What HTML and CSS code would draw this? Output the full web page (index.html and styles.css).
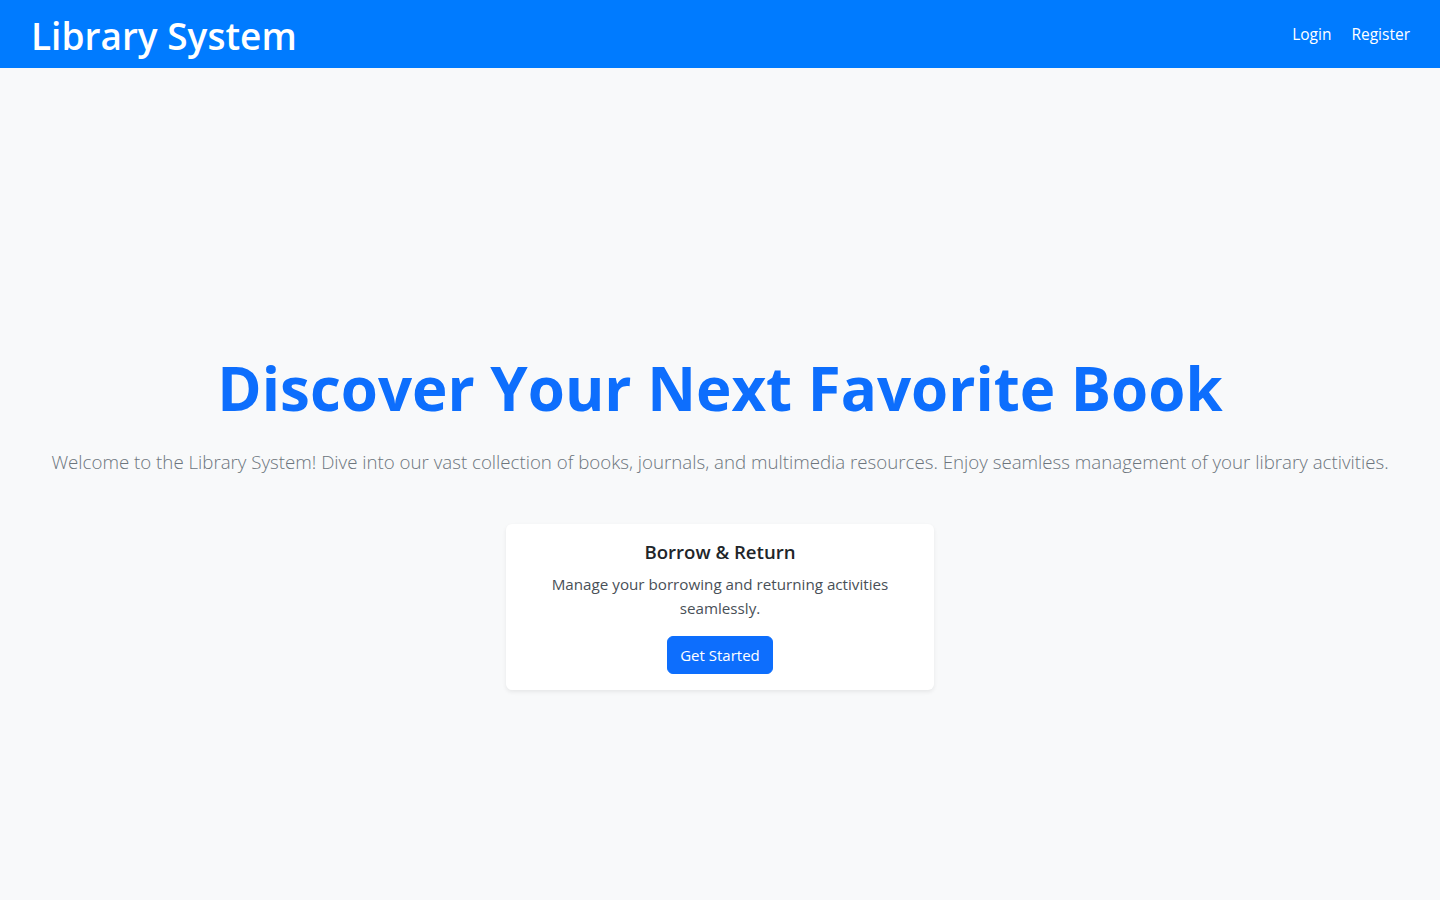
FILE: index.html
```html
<!DOCTYPE html>
<html lang="en">
<head>
<meta charset="utf-8">
<title>Library System</title>
<link rel="stylesheet" href="styles.css">
</head>
<body>
<header class="navbar">
  <a class="brand" href="#">Library System</a>
  <nav class="nav-links">
    <a href="#">Login</a>
    <a href="#">Register</a>
  </nav>
</header>
<main class="hero">
  <h1 class="hero-title">Discover Your Next Favorite Book</h1>
  <p class="lead">Welcome to the Library System! Dive into our vast collection of books, journals, and multimedia resources. Enjoy seamless management of your library activities.</p>
  <section class="card">
    <h2 class="card-title">Borrow &amp; Return</h2>
    <p class="card-text">Manage your borrowing and returning activities seamlessly.</p>
    <a class="btn" href="#">Get Started</a>
  </section>
</main>
</body>
</html>
```
FILE: styles.css
```css
* { box-sizing: border-box; }

html, body {
  margin: 0;
  height: 100%;
}

body {
  font-family: "Open Sans", "Noto Sans", sans-serif;
  background: #f8f9fa;
  color: #212529;
  display: flex;
  flex-direction: column;
}

a { text-decoration: none; }

.navbar {
  height: 68px;
  background: #007bff;
  display: flex;
  align-items: center;
  justify-content: space-between;
  padding: 0 30px 0 31px;
  flex-shrink: 0;
}

.brand {
  color: #fff;
  font-size: 37px;
  font-weight: 600;
  line-height: 1;
  margin-top: 2px;
}

.nav-links {
  display: flex;
  gap: 20px;
}

.nav-links a {
  color: #fff;
  font-size: 15.5px;
}

.hero {
  flex: 1;
  display: flex;
  flex-direction: column;
  align-items: center;
  justify-content: center;
  padding: 74px 0 0;
  text-align: center;
}

.hero-title {
  margin: 0 0 23px;
  font-size: 60px;
  font-weight: 700;
  line-height: 72px;
  color: #0d6efd;
}

.lead {
  margin: 0 0 47px;
  font-size: 18.7px;
  line-height: 30px;
  font-weight: 300;
  color: #6c757d;
}

.card {
  width: 428px;
  background: #fff;
  border-radius: 6px;
  box-shadow: 0 2px 4px rgba(0, 0, 0, 0.075);
  padding: 16px 16px 16px;
  display: flex;
  flex-direction: column;
  align-items: center;
}

.card-title {
  margin: 0 0 8px;
  font-size: 18.6px;
  font-weight: 600;
  line-height: 24px;
}

.card-text {
  margin: 0 0 16px;
  font-size: 15.2px;
  line-height: 24px;
  color: #495057;
}

.btn {
  background: #0d6efd;
  border: 1px solid #0d6efd;
  color: #fff;
  font-size: 15px;
  line-height: 24px;
  padding: 6px 12px;
  border-radius: 6px;
}
```
